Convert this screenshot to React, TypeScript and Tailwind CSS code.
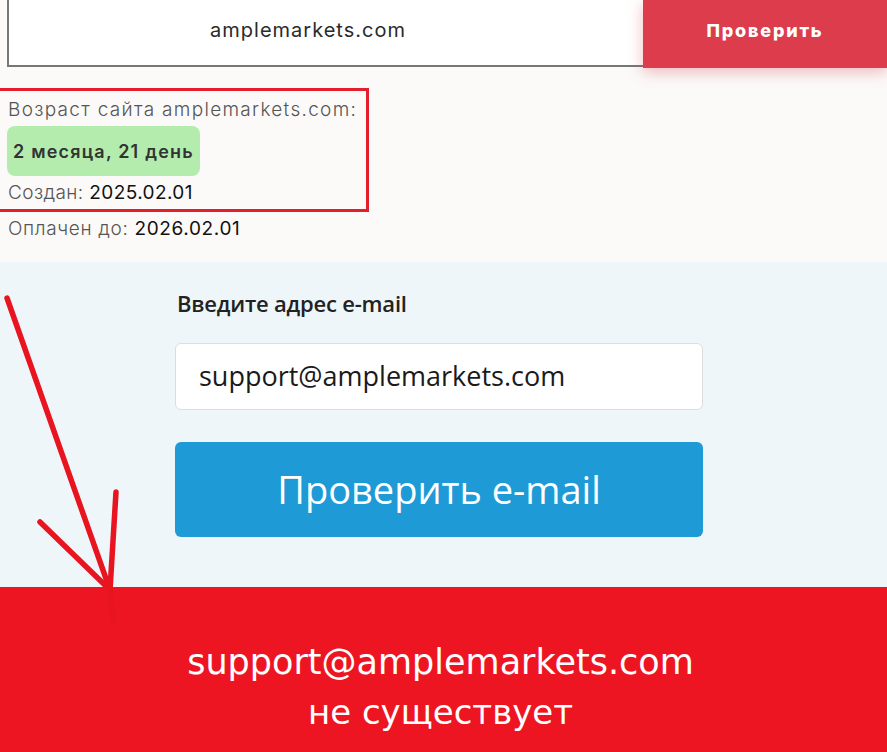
import React from "react";

const Arrow = () => (
  <svg
    className="absolute left-0 top-0 pointer-events-none"
    width="200"
    height="752"
    viewBox="0 0 200 752"
    fill="none"
  >
    <g stroke="#e8141f" strokeWidth="5.5" strokeLinecap="round" strokeLinejoin="round">
      <path d="M7 298 L110 590 L113 620" />
      <path d="M116 492 L110 590" />
      <path d="M40 522 L108 588" />
    </g>
  </svg>
);

const App = () => {
  return (
    <div className="relative w-[887px] h-[752px] overflow-hidden bg-[#fbfaf9]">
      {/* Domain check */}
      <section className="h-[262px] bg-[#fbfaf9] font-['Inter',sans-serif]">
        <div className="flex h-[68px]">
          <div className="ml-[7px] w-[636px] h-[67px] bg-white border-l-2 border-b-2 border-[#777] flex items-center justify-center pr-[36px] pb-[6px] text-[20px] text-[#2a2a2a] tracking-[1px]">
            amplemarkets.com
          </div>
          <button className="w-[244px] h-[68px] pb-[7px] bg-[#dc3c4c] text-white text-[18px] font-extrabold tracking-[1.8px] shadow-[0_4px_14px_rgba(220,60,76,0.35)]">
            Проверить
          </button>
        </div>

        <div className="mt-[20px] -ml-[3px] w-[372px] border-[3px] border-[#e31e2d] pt-[8px] pb-[5px]">
          <p className="ml-[8px] text-[19px] leading-[22px] text-[#555] font-light tracking-[1.3px]">
            Возраст сайта amplemarkets.com:
          </p>
          <div className="ml-[7px] mt-[5px] w-fit h-[50px] px-[6px] rounded-lg bg-[#b4ecae] flex items-center text-[18px] font-semibold text-[#333] tracking-[1.2px]">
            2 месяца, 21 день
          </div>
          <p className="ml-[8px] mt-[6px] text-[19px] leading-[22px] text-[#555] font-light tracking-[0.4px]">
            Создан: <span className="text-[#111] font-normal">2025.02.01</span>
          </p>
        </div>
        <p className="ml-[8px] mt-[6px] text-[19px] leading-[22px] text-[#555] font-light tracking-[0.65px]">
          Оплачен до: <span className="text-[#111] font-normal">2026.02.01</span>
        </p>
      </section>

      {/* Email check */}
      <section className="h-[325px] bg-[#eff6f9] font-['Open_Sans',sans-serif]">
        <div className="ml-[175px] w-[528px] pt-[28px]">
          <label className="block ml-[2px] text-[22px] leading-[26px] font-semibold text-[#222] tracking-[-0.2px]">
            Введите адрес e-mail
          </label>
          <div className="mt-[27px] h-[67px] bg-white border border-[#ddd] rounded-md flex items-center px-[23px] text-[27px] text-[#1a1a1a]">
            support@amplemarkets.com
          </div>
          <button className="mt-[32px] w-full h-[95px] bg-[#1e9ad6] rounded-md text-white text-[38px]">
            Проверить e-mail
          </button>
        </div>
      </section>

      {/* Result */}
      <section className="h-[165px] bg-[#ee1522] pt-[50px] text-center text-white font-['DejaVu_Sans',sans-serif]">
        <p className="text-[35px] leading-[50px] pr-[6px]">support@amplemarkets.com</p>
        <p className="text-[34px] leading-[50px] pr-[6px]">не существует</p>
      </section>

      <Arrow />
    </div>
  );
};

export default App;
